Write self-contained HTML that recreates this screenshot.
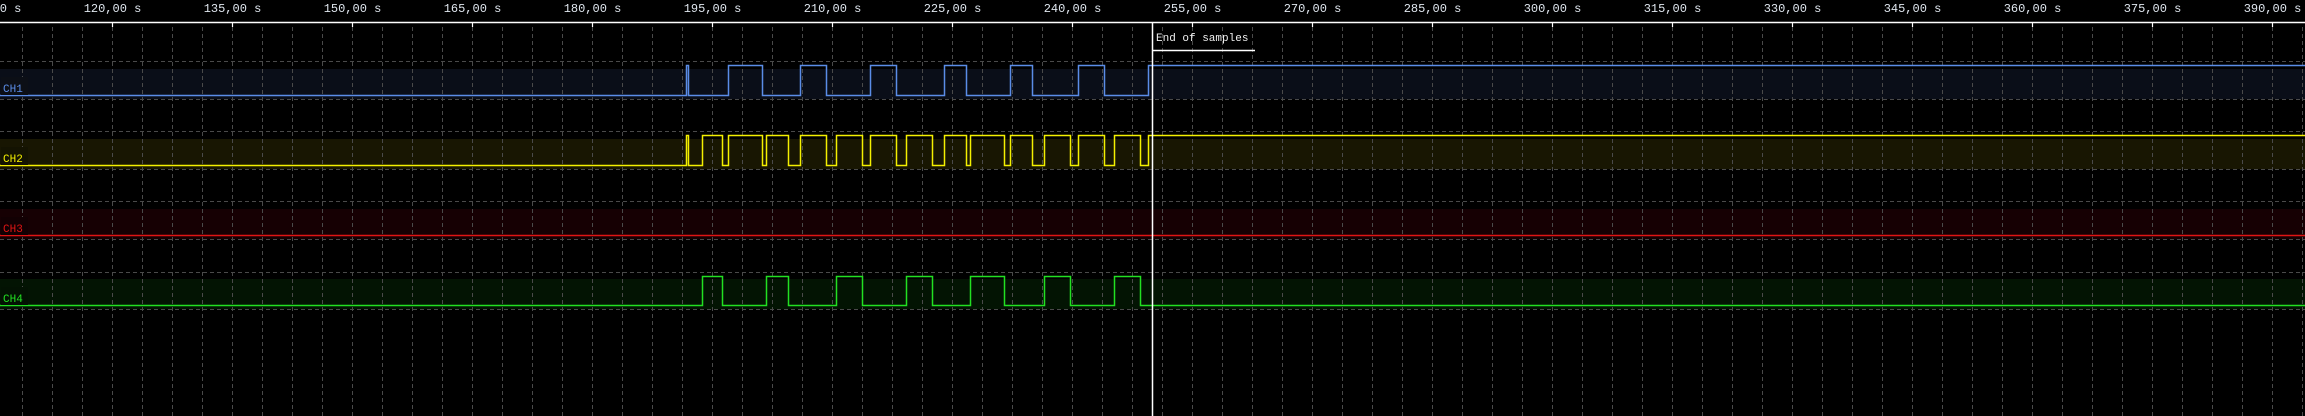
<!DOCTYPE html>
<html><head><meta charset="utf-8"><style>
html,body{margin:0;padding:0;background:#000;width:2305px;height:416px;overflow:hidden}
svg{display:block}
text{font-family:"Liberation Mono","DejaVu Sans Mono",monospace}
</style></head><body>
<svg width="2305" height="416" viewBox="0 0 2305 416" xmlns="http://www.w3.org/2000/svg">
<rect width="2305" height="416" fill="#000"/>
<!-- fills -->
<rect x="0" y="69" width="2305" height="30" fill="#0a0e18"/>
<rect x="0" y="139" width="2305" height="30" fill="#181602"/>
<rect x="0" y="209" width="2305" height="30" fill="#160003"/>
<rect x="0" y="279" width="2305" height="30" fill="#031403"/>
<!-- vertical grid -->
<g stroke="#4a4a4a" stroke-width="1" stroke-dasharray="4 3">
<path d="M22.5 27V416M52.5 27V416M82.5 27V416M112.5 27V416M142.5 27V416M172.5 27V416M202.5 27V416M232.5 27V416M262.5 27V416M292.5 27V416M322.5 27V416M352.5 27V416M382.5 27V416M412.5 27V416M442.5 27V416M472.5 27V416M502.5 27V416M532.5 27V416M562.5 27V416M592.5 27V416M622.5 27V416M652.5 27V416M682.5 27V416M712.5 27V416M742.5 27V416M772.5 27V416M802.5 27V416M832.5 27V416M862.5 27V416M892.5 27V416M922.5 27V416M952.5 27V416M982.5 27V416M1012.5 27V416M1042.5 27V416M1072.5 27V416M1102.5 27V416M1132.5 27V416M1162.5 27V416M1192.5 27V416M1222.5 27V416M1252.5 27V416M1282.5 27V416M1312.5 27V416M1342.5 27V416M1372.5 27V416M1402.5 27V416M1432.5 27V416M1462.5 27V416M1492.5 27V416M1522.5 27V416M1552.5 27V416M1582.5 27V416M1612.5 27V416M1642.5 27V416M1672.5 27V416M1702.5 27V416M1732.5 27V416M1762.5 27V416M1792.5 27V416M1822.5 27V416M1852.5 27V416M1882.5 27V416M1912.5 27V416M1942.5 27V416M1972.5 27V416M2002.5 27V416M2032.5 27V416M2062.5 27V416M2092.5 27V416M2122.5 27V416M2152.5 27V416M2182.5 27V416M2212.5 27V416M2242.5 27V416M2272.5 27V416M2302.5 27V416"/>
<path d="M0 61.5H2305M0 99.5H2305M0 131.5H2305M0 169.5H2305M0 201.5H2305M0 239.5H2305M0 272.5H2305M0 309.5H2305"/>
</g>
<!-- ruler -->
<path d="M0 22.5H2305" stroke="#fff" stroke-width="1.5"/>
<g stroke="#fff" stroke-width="1.2">
<path d="M112.5 22V27M232.5 22V27M352.5 22V27M472.5 22V27M592.5 22V27M712.5 22V27M832.5 22V27M952.5 22V27M1072.5 22V27M1192.5 22V27M1312.5 22V27M1432.5 22V27M1552.5 22V27M1672.5 22V27M1792.5 22V27M1912.5 22V27M2032.5 22V27M2152.5 22V27M2272.5 22V27"/>
</g>
<g fill="#dfe6ee" font-size="12" text-anchor="middle">
<text x="-7.5" y="12">105,00 s</text>
<text x="112.5" y="12">120,00 s</text>
<text x="232.5" y="12">135,00 s</text>
<text x="352.5" y="12">150,00 s</text>
<text x="472.5" y="12">165,00 s</text>
<text x="592.5" y="12">180,00 s</text>
<text x="712.5" y="12">195,00 s</text>
<text x="832.5" y="12">210,00 s</text>
<text x="952.5" y="12">225,00 s</text>
<text x="1072.5" y="12">240,00 s</text>
<text x="1192.5" y="12">255,00 s</text>
<text x="1312.5" y="12">270,00 s</text>
<text x="1432.5" y="12">285,00 s</text>
<text x="1552.5" y="12">300,00 s</text>
<text x="1672.5" y="12">315,00 s</text>
<text x="1792.5" y="12">330,00 s</text>
<text x="1912.5" y="12">345,00 s</text>
<text x="2032.5" y="12">360,00 s</text>
<text x="2152.5" y="12">375,00 s</text>
<text x="2272.5" y="12">390,00 s</text>
</g>
<!-- traces -->
<g fill="none" stroke-width="1.5">
<path stroke="#5b8de8" d="M0 95.5H686.5V65.5H688.5V95.5H728.5V65.5H762.5V95.5H800.5V65.5H826.5V95.5H870.5V65.5H896.5V95.5H944.5V65.5H966.5V95.5H1010.5V65.5H1032.5V95.5H1078.5V65.5H1104.5V95.5H1148.5V65.5H2305"/>
<path stroke="#f4f000" d="M0 165.5H686.5V135.5H688.5V165.5H702.5V135.5H722.5V165.5H728.5V135.5H762.5V165.5H766.5V135.5H788.5V165.5H800.5V135.5H826.5V165.5H836.5V135.5H862.5V165.5H870.5V135.5H896.5V165.5H906.5V135.5H932.5V165.5H944.5V135.5H966.5V165.5H970.5V135.5H1004.5V165.5H1010.5V135.5H1032.5V165.5H1044.5V135.5H1070.5V165.5H1078.5V135.5H1104.5V165.5H1114.5V135.5H1140.5V165.5H1148.5V135.5H2305"/>
<path stroke="#e01414" d="M0 235.5H2305"/>
<path stroke="#22e022" d="M0 305.5H702.5V276.5H722.5V305.5H766.5V276.5H788.5V305.5H836.5V276.5H862.5V305.5H906.5V276.5H932.5V305.5H970.5V276.5H1004.5V305.5H1044.5V276.5H1070.5V305.5H1114.5V276.5H1140.5V305.5H2305"/>
</g>
<!-- channel labels -->
<g font-size="11">
<rect x="1" y="77" width="27" height="18" fill="#0c0f16"/>
<text x="3" y="92" fill="#5b8de8">CH1</text>
<rect x="1" y="147" width="27" height="18" fill="#141302"/>
<text x="3" y="162" fill="#f4f000">CH2</text>
<rect x="1" y="217" width="27" height="18" fill="#120003"/>
<text x="3" y="232" fill="#e01414">CH3</text>
<rect x="1" y="287" width="27" height="18" fill="#031203"/>
<text x="3" y="302" fill="#22e022">CH4</text>
</g>
<!-- cursor -->
<path d="M1152.5 22V416" stroke="#fff" stroke-width="1.5"/>
<path d="M1152 50.5H1255" stroke="#fff" stroke-width="1.5"/>
<text x="1156" y="41" fill="#f0f0f0" font-size="11">End of samples</text>
</svg>
</body></html>
